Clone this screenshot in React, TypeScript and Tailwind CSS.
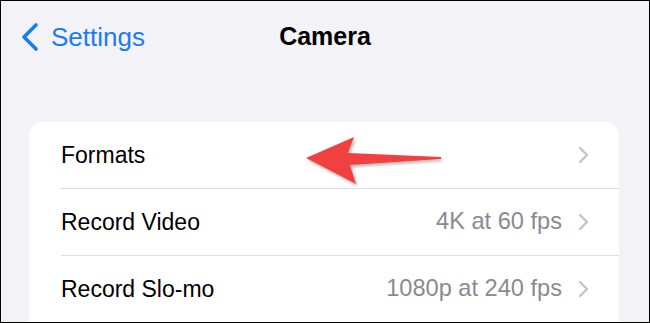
import React from "react";

const font = { fontFamily: '"Liberation Sans", Arial, sans-serif' };

function RowChevron() {
  return (
    <svg width="11" height="18" viewBox="0 0 11 18" className="shrink-0">
      <path d="M2 2 L9 9 L2 16" fill="none" stroke="#c4c4c7" strokeWidth="2.4" strokeLinecap="round" strokeLinejoin="round" />
    </svg>
  );
}

function Row({ label, value }: { label: string; value?: string }) {
  return (
    <div className="flex h-[66px] items-center pl-[32px] pr-[30px]">
      <span className="flex-1 text-[23px] text-black">{label}</span>
      {value && <span className="mr-[16px] text-[23.6px] text-[#8a8a8e]">{value}</span>}
      <RowChevron />
    </div>
  );
}

export default function App() {
  return (
    <div className="relative w-[650px] h-[323px] overflow-hidden border border-black bg-[#f2f2f7]" style={font}>
      <div className="grid h-[72px] grid-cols-[1fr_auto_1fr] items-center">
        <div className="flex items-center pl-[19px]">
          <svg width="19" height="30" viewBox="0 0 19 30" className="shrink-0">
            <path d="M16 3 L4 15 L16 27" fill="none" stroke="#1a7cf5" strokeWidth="3.6" strokeLinecap="round" strokeLinejoin="round" />
          </svg>
          <span className="ml-[12px] text-[26px] text-[#1a7cf5]">Settings</span>
        </div>
        <div className="text-[25px] font-bold text-black">Camera</div>
        <div />
      </div>
      <div className="ml-[28px] mt-[49px] w-[590px] rounded-t-[14px] bg-white">
        <Row label="Formats" />
        <div className="ml-[32px] h-px bg-[#dedee2]" />
        <Row label="Record Video" value="4K at 60 fps" />
        <div className="ml-[32px] h-px bg-[#dedee2]" />
        <Row label="Record Slo-mo" value="1080p at 240 fps" />
      </div>
      <svg className="absolute left-0 top-0" width="650" height="323" viewBox="0 0 650 323">
        <defs>
          <filter id="sh" x="-20%" y="-40%" width="140%" height="180%">
            <feDropShadow dx="1.5" dy="2" stdDeviation="1.5" floodColor="#000" floodOpacity="0.3" />
          </filter>
        </defs>
        <polygon
          points="305,157 353,136 347,152 440,156 440,158 349,164 355,183"
          fill="#f04141"
          filter="url(#sh)"
        />
      </svg>
    </div>
  );
}
